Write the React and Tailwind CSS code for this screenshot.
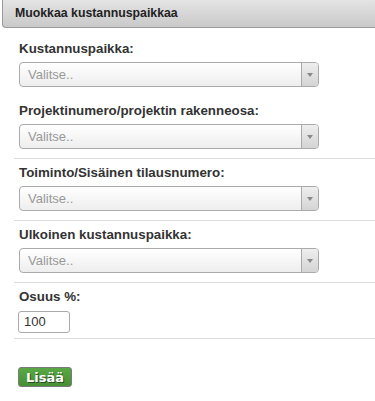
const fields = [
    { label: "Kustannuspaikka:", divider: false },
    { label: "Projektinumero/projektin rakenneosa:", divider: true },
    { label: "Toiminto/Sisäinen tilausnumero:", divider: true },
    { label: "Ulkoinen kustannuspaikka:", divider: true }
];

const SelectBox = () => (
    <div className="flex h-[25px] w-[300px] rounded-[4px] border border-[#aaa] bg-gradient-to-b from-white to-[#eeeeee] overflow-hidden">
        <div className="flex-1 flex items-center pl-[8px] text-[13px] text-[#999]">Valitse..</div>
        <div className="w-[17px] flex items-center justify-center border-l border-[#aaa] bg-gradient-to-b from-[#eeeeee] to-[#d4d4d4]">
            <span className="block w-0 h-0 border-l-[3px] border-r-[3px] border-t-[4px] border-l-transparent border-r-transparent border-t-[#888]"></span>
        </div>
    </div>
);

const App = () => {
    return (
        <div className="w-[375px] h-[401px] bg-white overflow-hidden font-['Liberation_Sans',Arial,sans-serif]">
            <div className="ml-[2px] h-[28px] flex items-center pl-[12px] border-l border-b border-[#9a9a9a] rounded-bl-[4px] bg-gradient-to-b from-[#e4e4e4] to-[#c9c9c9]">
                <h2 className="text-[12.3px] font-bold text-[#222]">Muokkaa kustannuspaikkaa</h2>
            </div>

            <div className="pl-[14px] pt-[7px]">
                {fields.map((field, index) => (
                    <div key={index} className={`pl-[5px] pt-[6px] pb-[9px] border-b ${field.divider ? "border-[#dddddd]" : "border-transparent"}`}>
                        <label className="block h-[16px] leading-[16px] text-[13.33px] font-bold text-[#333]">{field.label}</label>
                        <div className="mt-[5px]">
                            <SelectBox />
                        </div>
                    </div>
                ))}

                <div className="pl-[4px] pt-[6px] pb-[5px] border-b border-[#dddddd]">
                    <label className="block h-[16px] leading-[16px] text-[13.33px] font-bold text-[#333] pl-[1px]">Osuus %:</label>
                    <div className="mt-[6px] w-[52px] h-[22px] rounded-[3px] border border-[#aaa] flex items-center pl-[5px] text-[13px] text-[#333]">100</div>
                </div>

                <div className="flex pl-[4px] pt-[28px]">
                    <button className="flex items-center h-[20px] px-[7px] rounded-[3px] border border-[#7a7a7a] bg-gradient-to-b from-[#5aa845] to-[#468f33] text-white text-[13px] font-bold font-['DejaVu_Sans',sans-serif] leading-none [text-shadow:1px_1px_0_#2a4a20]">
                        Lisää
                    </button>
                </div>
            </div>
        </div>
    );
};

export default App;
